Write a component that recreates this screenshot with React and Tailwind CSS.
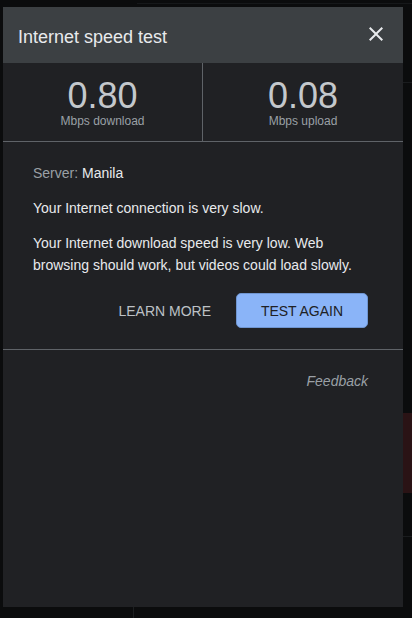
import React from "react";

export default function App() {
  return (
    <div
      className="relative w-[412px] h-[618px] overflow-hidden bg-[#0b0c0d]"
      style={{ fontFamily: '"Liberation Sans", Arial, sans-serif' }}
    >
      {/* faint page content behind the overlay */}
      <div className="absolute left-[137px] top-[3px] right-0 h-px bg-[#16181a]" />
      <div className="absolute right-0 top-[413px] w-[9px] h-[80px] bg-[#2a1315]" />
      <div className="absolute left-[133px] top-[607px] w-px h-[11px] bg-[#1c1e20]" />
      <div className="absolute right-0 top-[82px] w-[9px] h-px bg-[#1a1c1e]" />
      <div className="absolute right-0 top-[536px] w-[9px] h-px bg-[#1a1c1e]" />

      <div className="relative ml-[3px] mt-[7px] w-[400px] h-[600px] bg-[#202124] flex flex-col">
        {/* header */}
        <div className="h-[56px] bg-[#3c4043] flex items-start justify-between">
          <div className="pl-[15px] pt-[19px] text-[18px] leading-[22px] text-[#e8eaed]">
            Internet speed test
          </div>
          <svg
            className="mt-[15px] mr-[15px]"
            width="24"
            height="24"
            viewBox="0 0 24 24"
            fill="#e8eaed"
          >
            <path d="M19 6.41L17.59 5 12 10.59 6.41 5 5 6.41 10.59 12 5 17.59 6.41 19 12 13.41 17.59 19 19 17.59 13.41 12z" />
          </svg>
        </div>

        {/* stats */}
        <div className="h-[79px] flex border-b border-[#5f6368]">
          <div className="w-[200px] border-r border-[#5f6368] flex flex-col items-center pt-[15px]">
            <div className="text-[36px] leading-[36px] text-[#c4c8cc]">0.80</div>
            <div className="text-[12px] leading-[14px] text-[#9aa0a6]">Mbps download</div>
          </div>
          <div className="flex-1 flex flex-col items-center pt-[15px]">
            <div className="text-[36px] leading-[36px] text-[#c4c8cc]">0.08</div>
            <div className="text-[12px] leading-[14px] text-[#9aa0a6]">Mbps upload</div>
          </div>
        </div>

        {/* body */}
        <div className="pl-[30px] pr-[35px] pt-[20px] pb-[21px] border-b border-[#5f6368] text-[14px] leading-[22px] text-[#e8eaed]">
          <div>
            <span className="text-[#9aa0a6]">Server: </span>
            <span>Manila</span>
          </div>
          <div className="mt-[13px]">Your Internet connection is very slow.</div>
          <div className="mt-[13px]">
            Your Internet download speed is very low. Web browsing should work, but videos could load slowly.
          </div>
          <div className="mt-[17px] flex justify-end">
            <button className="h-[35px] px-[25px] text-[14px] text-[#bdc1c6] bg-transparent">
              LEARN MORE
            </button>
            <button className="h-[35px] w-[132px] rounded-[5px] bg-[#8ab4f8] border border-[#6f95d0] text-[14px] text-[#202124]">
              TEST AGAIN
            </button>
          </div>
        </div>

        {/* feedback */}
        <div className="pr-[35px] pt-[20px] flex justify-end">
          <span className="italic text-[14px] leading-[22px] text-[#9aa0a6]">Feedback</span>
        </div>
      </div>
    </div>
  );
}
